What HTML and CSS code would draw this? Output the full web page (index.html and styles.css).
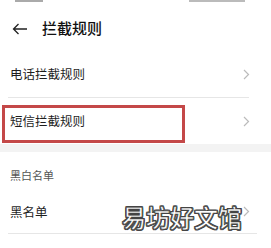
FILE: index.html
```html
<!DOCTYPE html>
<html lang="zh">
<head>
<meta charset="utf-8">
<link rel="stylesheet" href="styles.css">
</head>
<body>
<div class="page">
  <div class="status">
    <span class="st-left"></span>
    <span class="st-right"></span>
  </div>
  <div class="header">
    <svg class="back" width="16" height="12" viewBox="0 0 16 12"><path d="M15 6H1.5M6.5 1L1.5 6l5 5" fill="none" stroke="#222" stroke-width="1.3"/></svg>
    <span class="title">拦截规则</span>
  </div>
  <div class="group">
    <div class="row">
      <span class="label">电话拦截规则</span>
      <svg class="chev" width="7" height="11" viewBox="0 0 7 11"><path d="M1 1l4.5 4.5L1 10" fill="none" stroke="#bbb" stroke-width="1.2"/></svg>
    </div>
    <div class="divider"></div>
    <div class="row">
      <span class="label">短信拦截规则</span>
      <svg class="chev" width="7" height="11" viewBox="0 0 7 11"><path d="M1 1l4.5 4.5L1 10" fill="none" stroke="#bbb" stroke-width="1.2"/></svg>
      <div class="highlight"></div>
    </div>
  </div>
  <div class="gap"></div>
  <div class="group">
    <div class="section">黑白名单</div>
    <div class="row row-b">
      <span class="label">黑名单</span>
      <svg class="chev" width="7" height="11" viewBox="0 0 7 11"><path d="M1 1l4.5 4.5L1 10" fill="none" stroke="#bbb" stroke-width="1.2"/></svg>
      <span class="watermark">易坊好文馆</span>
    </div>
    <div class="divider divider-b"></div>
  </div>
</div>
</body>
</html>
```
FILE: styles.css
```css
* { box-sizing: border-box; }
html, body { margin: 0; padding: 0; background: #fff; }
body { font-family: "Noto Sans CJK SC", "Noto Sans", sans-serif; color: #222; }
.page { width: 271px; height: 248px; overflow: hidden; display: flex; flex-direction: column; }
.status { height: 4px; display: flex; justify-content: space-between; padding: 0 26px 0 15px; }
.st-left { width: 28px; height: 2px; background: #aaa; }
.st-right { width: 56px; height: 2px; background: #bbb; }
.header { height: 47px; display: flex; align-items: center; padding-left: 12px; gap: 14px; }
.back { display: block; margin-top: 2px; }
.title { font-size: 15px; font-weight: 500; color: #111; line-height: 20px; }
.group { display: flex; flex-direction: column; }
.row { position: relative; height: 46px; display: flex; align-items: center; justify-content: space-between; padding: 0 21px 0 10px; }
.label { font-size: 12.5px; color: #1e1e1e; line-height: 16px; }
.chev { display: block; }
.divider { height: 1px; background: #e6e6e6; margin: 0 22px 0 8px; }
.highlight { position: absolute; left: 2px; top: 7px; width: 183px; height: 38px; border: 3px solid #c44848; }
.gap { height: 8px; background: #f3f3f3; }
.section { height: 38px; display: flex; align-items: center; padding: 8px 0 0 10px; font-size: 11px; color: #555; }
.row-b { height: 43px; }
.divider-b { margin-right: 14px; }
.watermark { position: absolute; left: 122px; top: 14px; font-size: 24px; line-height: 26px; font-weight: 500; color: #fff; letter-spacing: 0; -webkit-text-stroke: 0.6px #444; text-shadow: 1px 0 0 #444, -1px 0 0 #444, 0 1px 0 #444, 0 -1px 0 #444, 1px 1px 0 #444, -1px -1px 0 #444, 1px -1px 0 #444, -1px 1px 0 #444; }
```
